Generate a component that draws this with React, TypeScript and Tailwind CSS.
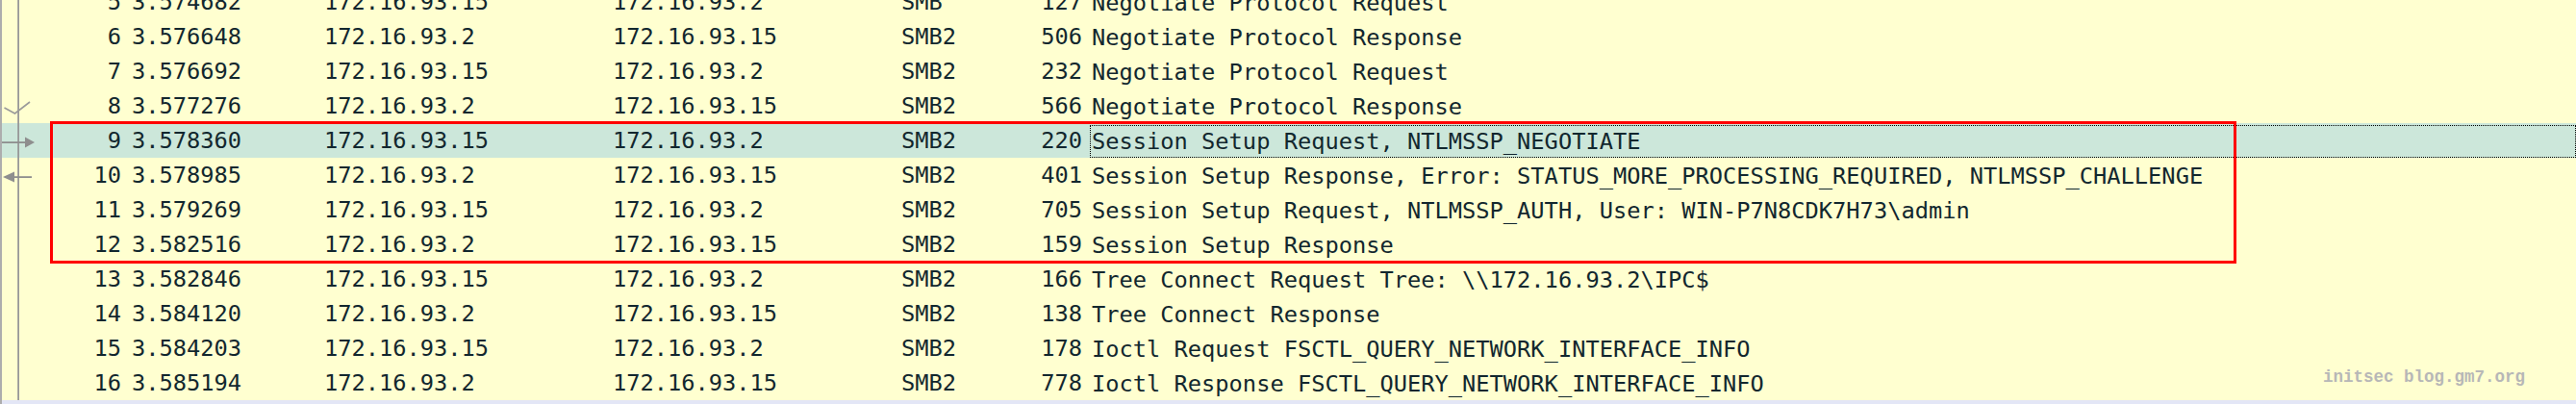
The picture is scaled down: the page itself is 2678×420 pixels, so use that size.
import React from 'react'

interface Packet {
  no: number
  time: string
  src: string
  dst: string
  proto: string
  len: number
  info: string
  mark?: 'ack' | 'req' | 'resp'
}

const packets: Packet[] = [
  { no: 5, time: '3.574682', src: '172.16.93.15', dst: '172.16.93.2', proto: 'SMB', len: 127, info: 'Negotiate Protocol Request' },
  { no: 6, time: '3.576648', src: '172.16.93.2', dst: '172.16.93.15', proto: 'SMB2', len: 506, info: 'Negotiate Protocol Response' },
  { no: 7, time: '3.576692', src: '172.16.93.15', dst: '172.16.93.2', proto: 'SMB2', len: 232, info: 'Negotiate Protocol Request' },
  { no: 8, time: '3.577276', src: '172.16.93.2', dst: '172.16.93.15', proto: 'SMB2', len: 566, info: 'Negotiate Protocol Response', mark: 'ack' },
  { no: 9, time: '3.578360', src: '172.16.93.15', dst: '172.16.93.2', proto: 'SMB2', len: 220, info: 'Session Setup Request, NTLMSSP_NEGOTIATE', mark: 'req' },
  { no: 10, time: '3.578985', src: '172.16.93.2', dst: '172.16.93.15', proto: 'SMB2', len: 401, info: 'Session Setup Response, Error: STATUS_MORE_PROCESSING_REQUIRED, NTLMSSP_CHALLENGE', mark: 'resp' },
  { no: 11, time: '3.579269', src: '172.16.93.15', dst: '172.16.93.2', proto: 'SMB2', len: 705, info: 'Session Setup Request, NTLMSSP_AUTH, User: WIN-P7N8CDK7H73\\admin' },
  { no: 12, time: '3.582516', src: '172.16.93.2', dst: '172.16.93.15', proto: 'SMB2', len: 159, info: 'Session Setup Response' },
  { no: 13, time: '3.582846', src: '172.16.93.15', dst: '172.16.93.2', proto: 'SMB2', len: 166, info: 'Tree Connect Request Tree: \\\\172.16.93.2\\IPC$' },
  { no: 14, time: '3.584120', src: '172.16.93.2', dst: '172.16.93.15', proto: 'SMB2', len: 138, info: 'Tree Connect Response' },
  { no: 15, time: '3.584203', src: '172.16.93.15', dst: '172.16.93.2', proto: 'SMB2', len: 178, info: 'Ioctl Request FSCTL_QUERY_NETWORK_INTERFACE_INFO' },
  { no: 16, time: '3.585194', src: '172.16.93.2', dst: '172.16.93.15', proto: 'SMB2', len: 778, info: 'Ioctl Response FSCTL_QUERY_NETWORK_INTERFACE_INFO' }
]

// related-packet column: conversation line + ack / request / response markers
function Related({ mark }: { mark?: Packet['mark'] }) {
  return (
    <svg width="38" height="36" viewBox="0 0 38 36" className="shrink-0">
      <rect x="16.2" y="0" width="1.8" height="36" fill="#989898" />
      {mark === 'ack' && (
        <polyline points="2.5,20 13.5,26 29,14" fill="none" stroke="#9a9a9a" strokeWidth="1.6" />
      )}
      {mark === 'req' && (
        <>
          <rect x="0" y="19.2" width="26" height="1.8" fill="#8e8e8e" />
          <polygon points="24,14.5 34,20 24,25.5" fill="#8e8e8e" />
        </>
      )}
      {mark === 'resp' && (
        <>
          <polygon points="1,20 13,14.5 13,25.5" fill="#8e8e8e" />
          <rect x="12" y="19.2" width="19" height="1.8" fill="#8e8e8e" />
        </>
      )}
    </svg>
  )
}

export default function App() {
  return (
    <div className="relative w-[2678px] h-[420px] overflow-hidden bg-[#ffffd0] border-l-2 border-[#adadad] text-[#12272e] font-['DejaVu_Sans_Mono',monospace] text-[23.7px] leading-[36px]">
      {/* PACKET LIST */}
      <div className="flex flex-col -mt-[16px]">
        {packets.map(p => {
          const selected = p.no === 9
          return (
            <div
              key={p.no}
              className={`flex h-[36px] whitespace-pre ${selected ? 'bg-[#cce7da]' : ''}`}
            >
              <Related mark={p.mark} />
              <div className="w-[86px] text-right">{p.no}</div>
              <div className="w-[11px]" />
              <div className="w-[200px]">{p.time}</div>
              <div className="w-[300px]">{p.src}</div>
              <div className="w-[300px]">{p.dst}</div>
              <div className="w-[100px]">{p.proto}</div>
              <div className="w-[96px] text-right pr-[8px]">{p.len}</div>
              <div
                className={`flex-1 pl-[1px] ${
                  selected
                    ? 'mt-[2px] h-[34px] leading-[32px] border border-dotted border-black'
                    : 'border border-transparent'
                }`}
              >
                {p.info}
              </div>
            </div>
          )
        })}
      </div>

      <div className="relative h-[4px] bg-[#e3e6f6]" />

      {/* ANNOTATION */}
      <div className="absolute left-[50px] top-[126px] w-[2273px] h-[148px] border-[3px] border-[#ff0000]" />

      <div className="absolute left-[2413px] top-[380px] text-[17.5px] leading-[24px] font-bold text-[#b7b7b7] font-['Liberation_Mono',monospace] whitespace-pre">
        initsec blog.gm7.org
      </div>
    </div>
  )
}
